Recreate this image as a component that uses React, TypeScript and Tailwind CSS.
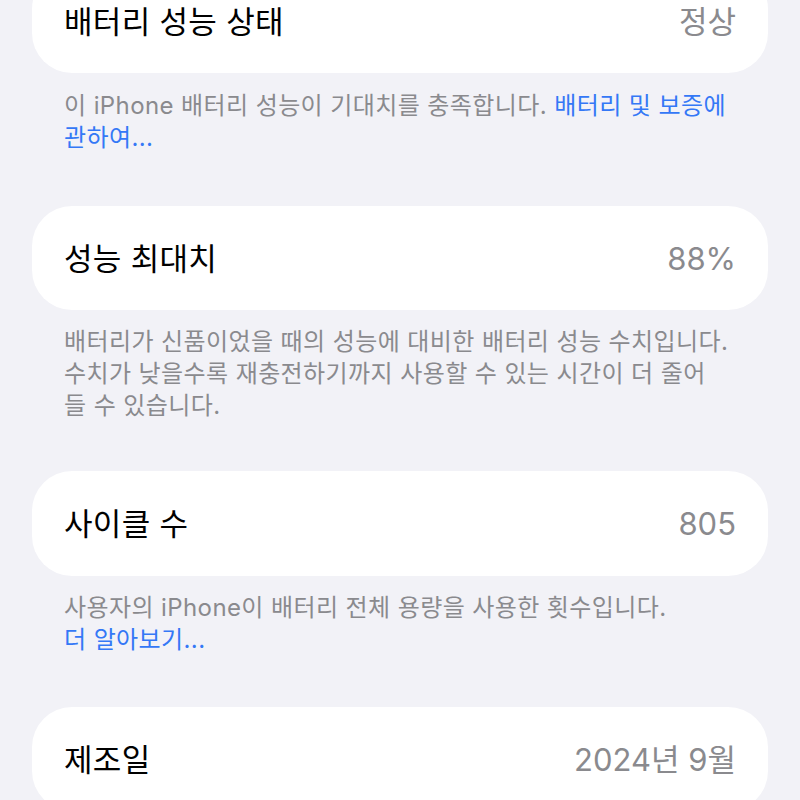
const font = {
  fontFamily: 'Inter, "Noto Sans CJK KR", sans-serif',
};

function Row({ label, value, className = "" }: { label: string; value: string; className?: string }) {
  return (
    <div
      className={`h-[104px] rounded-[40px] bg-white px-8 flex items-center justify-between ${className}`}
    >
      <span className="text-[31px] text-black leading-none tracking-[0.3px]">{label}</span>
      <span className="text-[31px] text-[#8a8a8e] leading-none">{value}</span>
    </div>
  );
}

export default function App() {
  return (
    <div className="w-[800px] h-[800px] overflow-hidden bg-[#f2f2f7] px-8" style={font}>
      <Row label="배터리 성능 상태" value="정상" className="mt-[-31px]" />
      <p className="px-8 pt-[17px] mb-[52px] text-[24px] leading-[32px] tracking-[0.4px] text-[#8a8a8e] whitespace-nowrap">
        이 iPhone 배터리 성능이 기대치를 충족합니다.{" "}
        <span className="text-[#3478f6]">배터리 및 보증에</span>
        <br />
        <span className="text-[#3478f6]">관하여...</span>
      </p>

      <Row label="성능 최대치" value="88%" />
      <p className="px-8 pt-4 mb-[49px] text-[24px] leading-[32px] tracking-[0.4px] text-[#8a8a8e] whitespace-nowrap">
        배터리가 신품이었을 때의 성능에 대비한 배터리 성능 수치입니다.
        <br />
        수치가 낮을수록 재충전하기까지 사용할 수 있는 시간이 더 줄어
        <br />
        들 수 있습니다.
      </p>

      <Row label="사이클 수" value="805" className="h-[105px]" />
      <p className="px-8 pt-4 mb-[51px] text-[24px] leading-[32px] tracking-[0.4px] text-[#8a8a8e] whitespace-nowrap">
        사용자의 iPhone이 배터리 전체 용량을 사용한 횟수입니다.
        <br />
        <span className="text-[#3478f6]">더 알아보기...</span>
      </p>

      <Row label="제조일" value="2024년 9월" />
    </div>
  );
}
